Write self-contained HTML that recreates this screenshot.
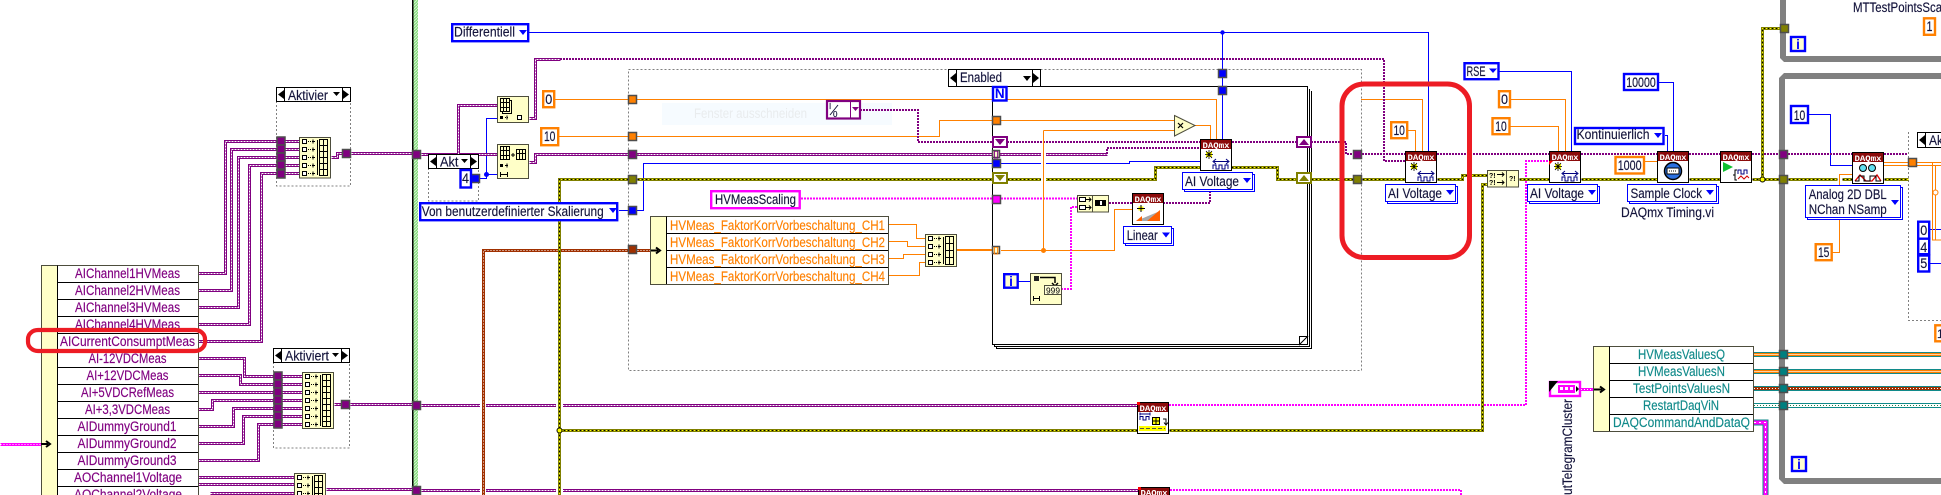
<!DOCTYPE html>
<html lang="de"><head><meta charset="utf-8"><title>LabVIEW Block Diagram</title>
<style>
html,body{margin:0;padding:0;background:#fff;overflow:hidden;width:1941px;height:495px}
svg{display:block}
text{font-family:"Liberation Sans",sans-serif;font-size:13.5px;fill:#14143c;stroke:#14143c;stroke-width:.15}
.m{text-anchor:middle}
.pp{fill:#800080;stroke:#800080}.or{fill:#ff8000;stroke:#ff8000}.te{fill:#108a8a;stroke:#108a8a}
.dq{font-family:"Liberation Mono",monospace;font-size:8.5px;fill:#fff;font-weight:bold;stroke:none}
path{fill:none}
.w path,.w line{shape-rendering:crispEdges}
.pb{stroke:#800080;stroke-width:3}.pd{stroke:#fff;stroke-width:1;stroke-dasharray:2 1}
.th{stroke:#800080;stroke-width:2;stroke-dasharray:2 1}
.yb{stroke:#808000;stroke-width:3}.yy{stroke:#ffff00;stroke-width:1}.yd{stroke:#000;stroke-width:1;stroke-dasharray:2 2}
.br{stroke:#a03000;stroke-width:3}.mg{stroke:#ff00ff;stroke-width:2;stroke-dasharray:2 1}
.o{stroke:#ff8000;stroke-width:1}.b{stroke:#0000ff;stroke-width:1}
.tu{stroke:#4d4d4d;stroke-width:1.5}
.n{fill:#ffffc8;stroke:#4d4d3d;stroke-width:1}
.c{fill:#fff;stroke-width:2.4}
.cb{stroke:#0000ff}.co{stroke:#ff8000}.cm{stroke:#ff00ff}
.dd{fill:#fff;stroke:#0000ff;stroke-width:1}
</style></head><body>
<svg xmlns="http://www.w3.org/2000/svg" width="1941" height="495" viewBox="0 0 1941 495">
<defs>
<pattern id="hat" width="3" height="3" patternUnits="userSpaceOnUse"><rect width="3" height="3" fill="#88dc80"/><path d="M0 3L3 0" stroke="#d4f5cf" stroke-width="1"/></pattern>
<g id="pw">
<path d="M198 273H225V141H299M198 290H231V149H299M198 307H238V157H299M198 324H249V165H299M198 341H261V173H299"/>
<path d="M198 358H244V376H302M198 375H240V384H302M198 392H302M198 409H212V400H302M198 426H233V408H302M198 443H243V416H302M198 460H258V424H302"/>
<path d="M198 477H294M198 484H294M210 493H294M326 489H412M421 490H1138"/>
<path d="M331 157H337V153H342M351 153H412M421 154H497M458 154V105H497M529 162H535V154H1107"/>
<path d="M334 404H341M350 404H412M421 405H1137M529 118H535V59H560"/>
</g>
<g id="yw">
<path d="M628 179H559V495M637 179H992M559 430H1137M1169 430H1482V184H1487M1007 179H1155V167H1277V179H1296M1311 179H1353M1362 179H1405M1437 179H1462V175H1487M1519 179H1549M1581 179H1657M1689 179H1720M1752 179H1779M1762 179V28H1780M1788 179H1837M1842 179H1852M1884 179H1908"/>
</g>
<g id="row"><rect x=".5" y=".5" width="4" height="4" fill="#fff" stroke="#000"/><path d="M6 2.5H12" stroke="#000" stroke-dasharray="1 1"/><path d="M11 .5V4.5M10 2.5H13" stroke="#000"/></g>
<g id="volt"><path d="M6 13H12V18H6Z" style="fill:#ffff00"/><path d="M9 11V20M5 15.5H13M6 12L12 19M12 12L6 19" stroke="#000" stroke-width=".8"/><path d="M14 22.5H28M16 20L13 22.5L16 25M26 20L29 22.5L26 25" stroke="#000080" stroke-width="1"/><path d="M13 30V26H16V30H19V26H22V30H25V26H28V30" stroke="#000080" stroke-width="1"/></g>
</defs>

<!-- green border -->
<rect x="413" y="0" width="5" height="495" fill="url(#hat)"/>
<rect x="412" y="0" width="1.5" height="495" fill="#000"/>

<!-- gray structures -->
<path d="M1780 0V58L1784 62H1941V56H1786V0Z" style="fill:#808080"/>
<path d="M1941 73H1784L1779 78V479L1784 484H1941V478H1785V79H1941Z" style="fill:#808080"/>

<!-- dotted frames -->
<g stroke="#808080" stroke-width="1" stroke-dasharray="2 2" shape-rendering="crispEdges" fill="none">
<path d="M276.5 101V186H350.5V101"/>
<path d="M273.5 362V448H349.5V362"/>
<path d="M428.5 168V201H478.5V168"/>
<path d="M628.5 69.5H1361.5V370.5H628.5Z"/>
<path d="M1908.5 132V320.5H1941"/>
</g>

<!-- ghost window label -->
<rect x="662" y="103" width="230" height="22" fill="#f6fbff"/>
<text x="694" y="118" textLength="113" lengthAdjust="spacingAndGlyphs" style="fill:#e9ecee;stroke:none">Fenster ausschneiden</text>

<g class="w">
<!-- blue + orange thin -->
<path class="b" d="M529 32.5H1428.5V151M1222.5 32.5V139M1499 71.5H1571.5V151M1659 82.5H1673.5V151M1665 135.5H1667.5V151M1809 114.5H1830.5V165.5H1852M619 210.5H643.5V163.5H992M1001 163.5H1129.5V161.5H1200M479 178.5H486.5V174.5H497M486.5 174.5V118.5H497M1018 281.5H1030M1930 229.5H1941M1930 263.5H1941"/>
<path class="o" d="M555 99.5H1216.5V139M559 136.5H939.5V120.5H1174M1043.5 130.5H1174M1043.5 130.5V250M1001 250.5H1114.5V209.5H1132M1195 125.5H1210.5V139M888 224.5H916.5V238.5H925M888 241.5H907.5V246.5H925M888 258.5H903.5V254.5H925M888 275.5H919.5V262.5H925M1361 99.5H1422.5V151M1408 130.5H1415.5V151M1510 99.5H1565.5V151M1510 126.5H1558.5V151M1645 161.5H1657M1832 252.5H1839.5V174.5H1852M1884 162.5H1908M1884 165.5H1908M1917 162.5H1941M1917 165.5H1941M1932.5 162V240H1941M1935.5 165V240"/>
<path d="M957 250H992" stroke="#ff8000" stroke-width="2"/>

<!-- thin purple -->
<path class="th" d="M560 59H1384V161H1405M860 110H918V142H992M1007 142H1200M1232 142H1296M1311 142H1346V154H1353M1362 154H1405M1437 154H1549M1581 154H1657M1689 154H1720M1752 154H1779M1788 154H1852M1884 154H1908M1107 154V148H1200M1163 203H1210V191M1109 203H1132"/>

<!-- magenta -->
<path class="mg" d="M801 198.5H992M1001 198.5H1077M1077 207H1071V289H1062M1169 405H1526V161H1549M1170 490H1461V495"/>
<g transform="translate(.5 .5)"><path d="M0 444H41" stroke="#ff00ff" stroke-width="3"/><path d="M0 444H41" stroke="#fff" stroke-dasharray="1 2"/></g>

<!-- double purple -->
<g transform="translate(.5 .5)"><use href="#pw" class="pb"/><use href="#pw" class="pd"/></g>

<!-- brown -->
<rect x="480" y="403" width="6" height="5" fill="#fff"/><rect x="480" y="488" width="6" height="5" fill="#fff"/>
<rect x="556" y="403" width="7" height="5" fill="#fff"/><rect x="556" y="488" width="7" height="5" fill="#fff"/>
<g transform="translate(.5 .5)"><path class="br" d="M483 495V250H650"/><path d="M483 495V250H650" stroke="#fff" stroke-dasharray="1 2"/></g>

<!-- yellow -->
<g transform="translate(.5 .5)"><use href="#yw" class="yb"/><use href="#yw" class="yy"/><use href="#yw" class="yd"/></g>
<rect x="1041" y="150" width="5" height="34" fill="#fff"/>
<path class="o" d="M1043.5 130.5V250"/>

<!-- teal wires -->
<path d="M1754 354.5H1941" stroke="#108a8a" stroke-width="5"/><path d="M1754 354.5H1941" stroke="#ff8000" stroke-width="3"/><path d="M1754 354.5H1941" stroke="#ffd0a0" stroke-width="1"/>
<path d="M1754 371.5H1941" stroke="#108a8a" stroke-width="5"/><path d="M1754 371.5H1941" stroke="#ff8000" stroke-width="3"/><path d="M1754 371.5H1941" stroke="#ffd0a0" stroke-width="1"/>
<path d="M1754 388.5H1941" stroke="#108a8a" stroke-width="5"/><path d="M1754 388.5H1941" stroke="#a03000" stroke-width="3"/><path d="M1754 388.5H1941" stroke="#fff" stroke-dasharray="1 2"/>
<path d="M1754 405.5H1941" stroke="#108a8a" stroke-width="5"/><path d="M1754 405.5H1941" stroke="#fff" stroke-width="3"/><path d="M1754 405.5H1941" stroke="#208040" stroke-dasharray="1 2"/>
<path d="M1754 422.5H1765.5V495" stroke="#108a8a" stroke-width="6"/><path d="M1754 422.5H1765.5V495" stroke="#ff00ff" stroke-width="4"/><path d="M1754 422.5H1765.5V495" stroke="#fff" stroke-width="1" stroke-dasharray="2 3"/>
<path d="M1581 389.5H1593" stroke="#ff00ff" stroke-width="3"/><path d="M1581 389.5H1593" stroke="#fff" stroke-dasharray="1 2"/>
</g>

<!-- junctions -->
<circle cx="1222.5" cy="32.5" r="2.2" fill="#0000ff"/>
<circle cx="486.5" cy="174.5" r="2.5" fill="#0000ff"/>
<circle cx="1043.5" cy="250.5" r="2.5" fill="#ff8000"/>
<circle cx="559.5" cy="430.5" r="2.5" fill="#ffff00" stroke="#000"/>
<circle cx="1762.5" cy="179.5" r="2.5" fill="#ffff00" stroke="#000"/>
<circle cx="1935.5" cy="192.5" r="2.5" fill="#fff" stroke="#ff8000"/>

<!-- FOR loop / case -->
<g stroke="#000" shape-rendering="crispEdges">
<path d="M994.5 344.5V346.5H1309.5V89M996.5 346.5V348.5H1311.5V91" stroke-width="1"/>
<path d="M992.5 86.5H1307.5V344.5H992.5Z" stroke-width="1"/>
</g>
<path d="M1299.5 344.5V336.5H1307.5Z" style="fill:#fff" stroke="#000"/>
<rect x="948.5" y="69.5" width="92" height="17" fill="#fff" stroke="#000"/>
<path d="M956.5 69.5V86.5M1032.5 69.5V86.5" stroke="#000"/>
<path d="M950 78L956 73V83Z" style="fill:#000"/><path d="M1039 78L1033 73V83Z" style="fill:#000"/>
<path d="M1023 76H1031L1027 81Z" style="fill:#000"/>
<text x="960" y="82" textLength="42" lengthAdjust="spacingAndGlyphs">Enabled</text>
<rect x="993" y="87" width="13.5" height="13.5" fill="#fff" stroke="#0000ff" stroke-width="2.4"/>
<text x="999.7" y="98" class="m" style="font-weight:bold;fill:#0000ff;stroke:none">N</text>

<!-- Case selectors -->
<g>
<rect x="276.5" y="87.5" width="74" height="14" fill="#fff" stroke="#000"/><path d="M284.5 87.5V101.5M342.5 87.5V101.5" stroke="#000"/>
<path d="M278 94.5L284 90V99Z" style="fill:#000"/><path d="M349 94.5L343 90V99Z" style="fill:#000"/><path d="M333 92H340L336.5 96Z" style="fill:#000"/>
<text x="288" y="100" textLength="40" lengthAdjust="spacingAndGlyphs">Aktivier</text>
<rect x="273.5" y="348.5" width="76" height="14" fill="#fff" stroke="#000"/><path d="M281.5 348.5V362.5M341.5 348.5V362.5" stroke="#000"/>
<path d="M275 355.5L281 351V360Z" style="fill:#000"/><path d="M348 355.5L342 351V360Z" style="fill:#000"/><path d="M332 353H339L335.5 357Z" style="fill:#000"/>
<text x="285" y="360.7" textLength="44" lengthAdjust="spacingAndGlyphs">Aktiviert</text>
<rect x="428.5" y="154.5" width="50" height="14" fill="#fff" stroke="#000"/><path d="M436.5 154.5V168.5M470.5 154.5V168.5" stroke="#000"/>
<path d="M430 161.5L436 157V166Z" style="fill:#000"/><path d="M477 161.5L471 157V166Z" style="fill:#000"/><path d="M461 159H468L464.5 163Z" style="fill:#000"/>
<text x="440" y="166.6" textLength="18.5" lengthAdjust="spacingAndGlyphs">Akt</text>
<rect x="1917.5" y="132.5" width="30" height="15" fill="#fff" stroke="#000"/><path d="M1925.5 132.5V147.5" stroke="#000"/><path d="M1919 140L1925 135V145Z" style="fill:#000"/>
<text x="1929" y="145" textLength="14" lengthAdjust="spacingAndGlyphs">Ak</text>
</g>

<!-- Tunnels -->
<g class="tu">
<g fill="#800080">
<rect x="277" y="137" width="8" height="8"/><rect x="277" y="145" width="8" height="8"/><rect x="277" y="153" width="8" height="8"/><rect x="277" y="161" width="8" height="8"/><rect x="277" y="170" width="8" height="8"/>
<rect x="274" y="372" width="8" height="8"/><rect x="274" y="380" width="8" height="8"/><rect x="274" y="388" width="8" height="8"/><rect x="274" y="396" width="8" height="8"/><rect x="274" y="404" width="8" height="8"/><rect x="274" y="412" width="8" height="8"/><rect x="274" y="420" width="8" height="8"/>
<rect x="342.5" y="149.5" width="8" height="8"/><rect x="341.5" y="400.5" width="8" height="8"/>
<rect x="412.5" y="150.5" width="8" height="8"/><rect x="412.5" y="401.5" width="8" height="8"/><rect x="412.5" y="486.5" width="8" height="8"/>
<rect x="628.5" y="150.5" width="8" height="8"/><rect x="1353.5" y="150.5" width="8" height="8"/><rect x="1779.5" y="150.5" width="8" height="8"/>
</g>
<rect x="628.5" y="95.5" width="8" height="8" fill="#ff8000"/>
<rect x="628.5" y="132.5" width="8" height="8" fill="#ff8000"/>
<rect x="992.5" y="116.5" width="8" height="8" fill="#ff8000"/>
<rect x="1908.5" y="158.5" width="8" height="8" fill="#ff8000"/>
<rect x="628.5" y="175.5" width="8" height="8" fill="#808000"/>
<rect x="1353.5" y="175.5" width="8" height="8" fill="#808000"/>
<rect x="1779.5" y="175.5" width="8" height="8" fill="#808000"/>
<rect x="1780.5" y="24.5" width="8" height="8" fill="#808000"/>
<rect x="628.5" y="206.5" width="8" height="8" fill="#0000ff"/>
<rect x="992.5" y="159.5" width="8" height="8" fill="#0000ff"/>
<rect x="1218.5" y="69.5" width="8" height="8" fill="#0000ff"/>
<rect x="1218.5" y="86.5" width="8" height="8" fill="#0000ff"/>
<rect x="471.5" y="174.5" width="8" height="8" fill="#0000ff"/>
<rect x="628.5" y="245.5" width="8" height="8" fill="#a03000"/>
<rect x="992.5" y="195.5" width="8" height="8" fill="#ff00ff"/>
<g fill="#007f7f"><rect x="1779.5" y="350.5" width="8" height="8"/><rect x="1779.5" y="367.5" width="8" height="8"/><rect x="1779.5" y="384.5" width="8" height="8"/><rect x="1779.5" y="401.5" width="8" height="8"/></g>
<rect x="992.5" y="150.5" width="7" height="7" fill="#fffdd0"/>
<rect x="992.5" y="246.5" width="7" height="7" fill="#fffdd0"/>
</g>
<text x="996" y="157" class="m" style="font-size:8px;font-weight:bold;fill:#800080;stroke:none">[]</text>
<text x="996" y="253" class="m" style="font-size:8px;font-weight:bold;fill:#ff8000;stroke:none">[]</text>

<!-- Shift registers -->
<g stroke-width="2">
<rect x="993" y="137" width="14" height="10" fill="#fff" stroke="#800080"/><path d="M995 139H1005L1000 145Z" style="fill:#800080"/>
<rect x="993" y="173" width="14" height="10" fill="#fff" stroke="#808000"/><path d="M995 175H1005L1000 181Z" style="fill:#808000"/>
<rect x="1297" y="137" width="14" height="10" fill="#fff" stroke="#800080"/><path d="M1299 145H1309L1304 139Z" style="fill:#800080"/>
<rect x="1297" y="173" width="14" height="10" fill="#fff" stroke="#808000"/><path d="M1299 181H1309L1304 175Z" style="fill:#808000"/>
</g>

<!-- Multiply -->
<path d="M1174.5 115.5L1195 125.5L1174.5 136Z" style="fill:#ffffc8" stroke="#4d4d3d"/>
<path d="M1178 123L1183 128M1183 123L1178 128" stroke="#000" stroke-width="1.2"/>

<!-- Build arrays -->
<g>
<rect class="n" x="299.5" y="137.5" width="31" height="40.5"/>
<use href="#row" x="302" y="139"/><use href="#row" x="302" y="147"/><use href="#row" x="302" y="155"/><use href="#row" x="302" y="163"/><use href="#row" x="302" y="171"/>
<path d="M319.5 139.5H327.5V175.5H319.5ZM323.5 139.5V175.5M319.5 145.5H327.5M319.5 151.5H327.5M319.5 157.5H327.5M319.5 163.5H327.5M319.5 169.5H327.5M317.5 140V175" stroke="#000"/>
<rect class="n" x="302.5" y="372.5" width="31" height="56"/>
<use href="#row" x="305" y="374"/><use href="#row" x="305" y="382"/><use href="#row" x="305" y="390"/><use href="#row" x="305" y="398"/><use href="#row" x="305" y="406"/><use href="#row" x="305" y="414"/><use href="#row" x="305" y="422"/>
<path d="M322.5 374.5H330.5V426.5H322.5ZM326.5 374.5V426.5M322.5 380.5H330.5M322.5 386.5H330.5M322.5 392.5H330.5M322.5 398.5H330.5M322.5 404.5H330.5M322.5 410.5H330.5M322.5 416.5H330.5M322.5 421.5H330.5M320.5 375V426" stroke="#000"/>
<rect class="n" x="294.5" y="473.5" width="31" height="30"/>
<use href="#row" x="297" y="475"/><use href="#row" x="297" y="483"/><use href="#row" x="297" y="491"/>
<path d="M314.5 475.5H322.5V500H314.5ZM318.5 475.5V500M314.5 481.5H322.5M314.5 487.5H322.5M314.5 493.5H322.5M312.5 476V500" stroke="#000"/>
<rect class="n" x="925.5" y="234.5" width="31" height="32"/>
<use href="#row" x="928" y="236"/><use href="#row" x="928" y="244"/><use href="#row" x="928" y="252"/><use href="#row" x="928" y="260"/>
<path d="M945.5 236.5H953.5V264.5H945.5ZM949.5 236.5V264.5M945.5 243.5H953.5M945.5 250.5H953.5M945.5 257.5H953.5M943.5 237V264" stroke="#000"/>
</g>

<!-- array subset nodes -->
<rect class="n" x="497.5" y="96.5" width="31" height="26"/>
<path d="M500.5 98.5H509.5V111.5H500.5ZM503.5 98.5V111.5M506.5 98.5V111.5M500.5 102.5H509.5M500.5 107.5H509.5M509.5 100.5H511.5V113.5H502.5V111.5" stroke="#000"/>
<rect x="500" y="116" width="3" height="3" fill="#000"/><path d="M505 117.5H508" stroke="#000" stroke-dasharray="1 1"/><path d="M507 115.5V119.5" stroke="#000"/><rect x="517.5" y="115.5" width="4" height="4" stroke="#000" fill="#fff"/>
<rect class="n" x="497.5" y="144.5" width="31" height="34"/>
<path d="M500.5 146.5H509.5V159.5H500.5ZM503.5 146.5V159.5M506.5 146.5V159.5M500.5 150.5H509.5M500.5 155.5H509.5M516.5 149.5H525.5V159.5H516.5ZM519.5 149.5V159.5M522.5 149.5V159.5M516.5 153.5H525.5M511 155H515M513 153V157" stroke="#000"/>
<rect x="500" y="164" width="3" height="3" fill="#000"/><path d="M505 165.5H508M507 163.5V167.5" stroke="#000"/><path d="M500 174.5H508M500.5 172V177M507.5 172V177" stroke="#000"/>

<!-- bundler/format nodes -->
<rect class="n" x="1077.5" y="195.5" width="31" height="16.5"/>
<path d="M1092.5 195.5V212" stroke="#4d4d3d"/>
<rect x="1079.5" y="197.5" width="6" height="4" stroke="#000" fill="#fff"/><rect x="1079.5" y="205.5" width="6" height="4" stroke="#000" fill="#fff"/><path d="M1086 199.5H1091M1086 207.5H1091M1089 197.5L1091 199.5L1089 201.5M1089 205.5L1091 207.5L1089 209.5" stroke="#000"/>
<rect x="1095" y="200" width="11" height="6" fill="#000"/><rect x="1100" y="201" width="2" height="4" fill="#fff"/>
<rect class="n" x="1030.5" y="273.5" width="31" height="31"/>
<rect x="1034" y="276" width="5" height="5" fill="#222"/><path d="M1040 277.5H1055V283M1052 283L1055 286L1058 283" stroke="#000" stroke-width="1.5"/>
<rect x="1044.5" y="285.5" width="17" height="9" stroke="#4d4d3d" fill="#ffffd8"/><text x="1053" y="293.5" class="m" textLength="14" lengthAdjust="spacingAndGlyphs" style="font-size:8px;fill:#000;stroke:none">999</text>
<path d="M1033 298.5H1040M1033.5 296V301M1039.5 296V301" stroke="#000"/>
<rect class="n" x="1487.5" y="170.5" width="31" height="16.5"/><path d="M1506.5 170.5V187" stroke="#4d4d3d"/>
<text x="1489" y="178" style="font-size:7px;font-weight:bold;fill:#000;stroke:none">?!</text><text x="1489" y="185" style="font-size:7px;font-weight:bold;fill:#000;stroke:none">?!</text><text x="1509" y="181" style="font-size:7px;font-weight:bold;fill:#000;stroke:none">?!</text>
<path d="M1497 174.5H1504M1497 182.5H1504M1502 172.5L1504 174.5L1502 176.5M1502 180.5L1504 182.5L1502 184.5" stroke="#000"/>

<!-- Clusters -->
<g>
<rect x="41.5" y="265.5" width="157" height="235" fill="#fff" stroke="#4d4d3d"/>
<rect x="42" y="266" width="15" height="234" fill="#ffffc8"/>
<path d="M57.5 265.5V495M57 282.5H198M57 299.5H198M57 316.5H198M57 333.5H198M57 350.5H198M57 367.5H198M57 384.5H198M57 401.5H198M57 418.5H198M57 435.5H198M57 452.5H198M57 469.5H198M57 486.5H198" stroke="#000" shape-rendering="crispEdges"/>
<path d="M41 444H48M46 441L50 444L46 447" stroke="#000" stroke-width="2"/>
<g class="m">
<text class="pp m" x="127.5" y="278" textLength="105" lengthAdjust="spacingAndGlyphs">AIChannel1HVMeas</text>
<text class="pp m" x="127.5" y="295" textLength="105" lengthAdjust="spacingAndGlyphs">AIChannel2HVMeas</text>
<text class="pp m" x="127.5" y="312" textLength="105" lengthAdjust="spacingAndGlyphs">AIChannel3HVMeas</text>
<text class="pp m" x="127.5" y="329" textLength="105" lengthAdjust="spacingAndGlyphs">AIChannel4HVMeas</text>
<text class="pp m" x="127.5" y="346" textLength="135" lengthAdjust="spacingAndGlyphs">AICurrentConsumptMeas</text>
<text class="pp m" x="127.5" y="363" textLength="78" lengthAdjust="spacingAndGlyphs">AI-12VDCMeas</text>
<text class="pp m" x="127.5" y="380" textLength="82" lengthAdjust="spacingAndGlyphs">AI+12VDCMeas</text>
<text class="pp m" x="127.5" y="397" textLength="93" lengthAdjust="spacingAndGlyphs">AI+5VDCRefMeas</text>
<text class="pp m" x="127.5" y="414" textLength="85" lengthAdjust="spacingAndGlyphs">AI+3,3VDCMeas</text>
<text class="pp m" x="127" y="431" textLength="99" lengthAdjust="spacingAndGlyphs">AIDummyGround1</text>
<text class="pp m" x="127" y="448" textLength="99" lengthAdjust="spacingAndGlyphs">AIDummyGround2</text>
<text class="pp m" x="127" y="465" textLength="99" lengthAdjust="spacingAndGlyphs">AIDummyGround3</text>
<text class="pp m" x="128" y="482" textLength="108" lengthAdjust="spacingAndGlyphs">AOChannel1Voltage</text>
<text class="pp m" x="128" y="499" textLength="108" lengthAdjust="spacingAndGlyphs">AOChannel2Voltage</text>
</g>
<rect x="650.5" y="216.5" width="238" height="68" fill="#fff" stroke="#4d4d3d"/>
<rect x="651" y="217" width="15.5" height="67" fill="#ffffc8"/>
<path d="M666.5 216.5V284M666 233.5H888M666 250.5H888M666 267.5H888" stroke="#000" shape-rendering="crispEdges"/>
<path d="M651 250.5H658M656 247.5L660 250.5L656 253.5" stroke="#000" stroke-width="2"/>
<text class="or" x="670" y="230" textLength="215" lengthAdjust="spacingAndGlyphs">HVMeas_FaktorKorrVorbeschaltung_CH1</text>
<text class="or" x="670" y="247" textLength="215" lengthAdjust="spacingAndGlyphs">HVMeas_FaktorKorrVorbeschaltung_CH2</text>
<text class="or" x="670" y="264" textLength="215" lengthAdjust="spacingAndGlyphs">HVMeas_FaktorKorrVorbeschaltung_CH3</text>
<text class="or" x="670" y="281" textLength="215" lengthAdjust="spacingAndGlyphs">HVMeas_FaktorKorrVorbeschaltung_CH4</text>
<rect x="1593.5" y="346.5" width="160" height="85" fill="#fff" stroke="#4d4d3d"/>
<rect x="1594" y="347" width="15.5" height="84" fill="#ffffc8"/>
<path d="M1609.5 346.5V431M1609 363.5H1753M1609 380.5H1753M1609 397.5H1753M1609 414.5H1753" stroke="#000" shape-rendering="crispEdges"/>
<path d="M1594 389.5H1602M1600 386.5L1604 389.5L1600 392.5" stroke="#000" stroke-width="2"/>
<text class="te m" x="1681.5" y="359" textLength="87" lengthAdjust="spacingAndGlyphs">HVMeasValuesQ</text>
<text class="te m" x="1681.5" y="376" textLength="87" lengthAdjust="spacingAndGlyphs">HVMeasValuesN</text>
<text class="te m" x="1681.5" y="393" textLength="97" lengthAdjust="spacingAndGlyphs">TestPointsValuesN</text>
<text class="te m" x="1681" y="410" textLength="76" lengthAdjust="spacingAndGlyphs">RestartDaqViN</text>
<text class="te m" x="1681.5" y="427" textLength="137" lengthAdjust="spacingAndGlyphs">DAQCommandAndDataQ</text>
</g>

<!-- Telegram terminal -->
<rect x="1550" y="382" width="30" height="14" fill="#fff" stroke="#ff00ff" stroke-width="2.4"/>
<path d="M1549 381H1558L1549 392Z" style="fill:#000"/>
<rect x="1558" y="385" width="17" height="8" fill="#ff00ff"/><rect x="1560" y="387" width="3" height="3" fill="#fff"/><rect x="1565" y="387" width="3" height="3" fill="#fff"/><rect x="1570" y="387" width="3" height="3" fill="#fff"/>
<path d="M1576 386L1579 389L1576 392Z" style="fill:#000"/>
<text transform="translate(1572 399) rotate(-90)" text-anchor="end" textLength="96" lengthAdjust="spacingAndGlyphs">utTelegramCluster</text>

<!-- Constants -->
<rect class="c cb" x="452.2" y="24.2" width="76" height="17"/>
<text x="454" y="36.7" textLength="61" lengthAdjust="spacingAndGlyphs">Differentiell</text>
<path d="M519 30H527L523 35Z" style="fill:#0000ff"/>
<rect class="c cb" x="420.2" y="203.2" width="197" height="17"/>
<text x="421.7" y="216" textLength="182" lengthAdjust="spacingAndGlyphs">Von benutzerdefinierter Skalierung</text>
<path d="M609 208H617L613 213Z" style="fill:#0000ff"/>
<rect class="c cb" x="460.5" y="170" width="10.5" height="17.5"/><text class="m" x="465.5" y="183" textLength="7" lengthAdjust="spacingAndGlyphs">4</text>
<rect class="c co" x="543.2" y="91.2" width="11" height="16"/><text class="m" x="548.7" y="104" textLength="7" lengthAdjust="spacingAndGlyphs">0</text>
<rect class="c co" x="541.2" y="128.2" width="17" height="17"/><text class="m" x="549.7" y="141" textLength="11.5" lengthAdjust="spacingAndGlyphs">10</text>
<rect class="c cm" x="711.2" y="191.2" width="88.5" height="17"/><text x="715" y="204" textLength="81" lengthAdjust="spacingAndGlyphs">HVMeasScaling</text>
<rect x="827" y="101" width="33" height="17.5" fill="#fff" stroke="#800080" stroke-width="2.2"/><path d="M850.5 101V118" stroke="#800080"/>
<path d="M852 107H859L855.5 111Z" style="fill:#800080"/>
<text x="829" y="109" style="font-size:8px">I</text><path d="M830 115L838 105" stroke="#14143c"/><text x="833" y="117" style="font-size:8px">0</text>
<rect class="c cb" x="1004.2" y="274.2" width="13.5" height="13.5" style="fill:#ffffd0"/><text class="m" x="1011" y="286" style="font-weight:bold;fill:#0000ff;stroke:none">i</text>
<rect class="c co" x="1391.2" y="122.2" width="16" height="16"/><text class="m" x="1399.2" y="135" textLength="11.5" lengthAdjust="spacingAndGlyphs">10</text>
<rect class="c cb" x="1464.5" y="63.2" width="34" height="16"/><text x="1466.5" y="76" textLength="19" lengthAdjust="spacingAndGlyphs">RSE</text><path d="M1489 68.5H1497L1493 73Z" style="fill:#0000ff"/>
<rect class="c co" x="1499" y="91.2" width="11" height="16"/><text class="m" x="1504.5" y="104" textLength="7" lengthAdjust="spacingAndGlyphs">0</text>
<rect class="c co" x="1492.5" y="118.2" width="17" height="16"/><text class="m" x="1501" y="131" textLength="11.5" lengthAdjust="spacingAndGlyphs">10</text>
<rect class="c cb" x="1575" y="128" width="88.5" height="16"/><text x="1576.5" y="139" textLength="73" lengthAdjust="spacingAndGlyphs">Kontinuierlich</text><path d="M1654 133H1662L1658 138Z" style="fill:#0000ff"/>
<rect class="c cb" x="1624" y="74" width="34" height="16"/><text class="m" x="1641" y="87" textLength="29.5" lengthAdjust="spacingAndGlyphs">10000</text>
<rect class="c co" x="1615.5" y="157" width="28.5" height="16.5"/><text class="m" x="1629.7" y="170" textLength="24" lengthAdjust="spacingAndGlyphs">1000</text>
<rect class="c cb" x="1791" y="37" width="14" height="14" style="fill:#ffffd0"/><text class="m" x="1798" y="49" style="font-weight:bold;fill:#0000ff;stroke:none">i</text>
<rect class="c cb" x="1792" y="457" width="14" height="14" style="fill:#ffffd0"/><text class="m" x="1799" y="469" style="font-weight:bold;fill:#0000ff;stroke:none">i</text>
<rect class="c cb" x="1791" y="106" width="17" height="17"/><text class="m" x="1799.5" y="120" textLength="11.5" lengthAdjust="spacingAndGlyphs">10</text>
<rect class="c co" x="1815.7" y="244.2" width="16" height="16"/><text class="m" x="1823.7" y="257" textLength="11.5" lengthAdjust="spacingAndGlyphs">15</text>
<rect class="c co" x="1924" y="18.3" width="11" height="16.5"/><text class="m" x="1929.5" y="31" textLength="6" lengthAdjust="spacingAndGlyphs">1</text>
<rect class="c cb" x="1918.2" y="221.7" width="11" height="17"/><text class="m" x="1923.7" y="235" textLength="7" lengthAdjust="spacingAndGlyphs">0</text>
<rect class="c cb" x="1918.2" y="238.7" width="11" height="15.5"/><text class="m" x="1923.7" y="252" textLength="7" lengthAdjust="spacingAndGlyphs">4</text>
<rect class="c cb" x="1918.2" y="255.5" width="11" height="16"/><text class="m" x="1923.7" y="268" textLength="7" lengthAdjust="spacingAndGlyphs">5</text>
<rect class="c co" x="1935.3" y="325.3" width="12" height="16"/><text x="1937" y="338" style="font-size:12px">1</text>

<!-- Polymorphic selectors -->
<g shape-rendering="crispEdges">
<rect class="dd" x="1184.5" y="174.5" width="70" height="17"/><rect class="dd" x="1182.5" y="172.5" width="70" height="17"/>
<rect class="dd" x="1125.5" y="228.5" width="48" height="17"/><rect class="dd" x="1123.5" y="226.5" width="48" height="17"/>
<rect class="dd" x="1387.5" y="186.5" width="70" height="17"/><rect class="dd" x="1385.5" y="184.5" width="70" height="17"/>
<rect class="dd" x="1529.5" y="186.5" width="70" height="17"/><rect class="dd" x="1527.5" y="184.5" width="70" height="17"/>
<rect class="dd" x="1629.5" y="186.5" width="89" height="17"/><rect class="dd" x="1627.5" y="184.5" width="89" height="17"/>
<rect class="dd" x="1807.5" y="187.5" width="95" height="32"/><rect class="dd" x="1805.5" y="185.5" width="95" height="32"/>
</g>
<text x="1185" y="186" textLength="54" lengthAdjust="spacingAndGlyphs">AI Voltage</text><path d="M1243 178H1251L1247 183Z" style="fill:#0000ff"/>
<text x="1126.7" y="240" textLength="31" lengthAdjust="spacingAndGlyphs">Linear</text><path d="M1162 232.5H1170L1166 237.5Z" style="fill:#0000ff"/>
<text x="1388" y="198" textLength="54" lengthAdjust="spacingAndGlyphs">AI Voltage</text><path d="M1446 190H1454L1450 195Z" style="fill:#0000ff"/>
<text x="1530" y="198" textLength="54" lengthAdjust="spacingAndGlyphs">AI Voltage</text><path d="M1588 190H1596L1592 195Z" style="fill:#0000ff"/>
<text x="1630.5" y="198" textLength="71.5" lengthAdjust="spacingAndGlyphs">Sample Clock</text><path d="M1706 190H1714L1710 195Z" style="fill:#0000ff"/>
<text x="1621" y="217" textLength="93" lengthAdjust="spacingAndGlyphs">DAQmx Timing.vi</text>
<text x="1808.7" y="199" textLength="78" lengthAdjust="spacingAndGlyphs">Analog 2D DBL</text>
<text x="1808.7" y="214" textLength="78" lengthAdjust="spacingAndGlyphs">NChan NSamp</text><path d="M1891 200H1899L1895 205Z" style="fill:#0000ff"/>
<text x="1853" y="12" textLength="107" lengthAdjust="spacingAndGlyphs">MTTestPointsScaling</text>

<!-- DAQmx VIs -->
<g>
<rect x="1200.5" y="139.5" width="31" height="31" fill="#fff" stroke="#000"/><rect x="1201" y="140" width="30" height="9" fill="#8b0a0a"/>
<text class="dq" x="1216" y="148" text-anchor="middle" textLength="27" lengthAdjust="spacingAndGlyphs">DAQmx</text>
<use href="#volt" x="1200" y="139"/>
<rect x="1405.5" y="151.5" width="31" height="31" fill="#fff" stroke="#000"/><rect x="1406" y="152" width="30" height="9" fill="#8b0a0a"/>
<text class="dq" x="1421" y="160" text-anchor="middle" textLength="27" lengthAdjust="spacingAndGlyphs">DAQmx</text>
<use href="#volt" x="1405" y="151"/>
<rect x="1549.5" y="151.5" width="31" height="31" fill="#fff" stroke="#000"/><rect x="1550" y="152" width="30" height="9" fill="#8b0a0a"/>
<text class="dq" x="1565" y="160" text-anchor="middle" textLength="27" lengthAdjust="spacingAndGlyphs">DAQmx</text>
<use href="#volt" x="1549" y="151"/>
<path d="M1549 161H1553L1549 165Z" style="fill:#ff0000"/>
<rect x="1132.5" y="193.5" width="31" height="31" fill="#fff" stroke="#000"/><rect x="1133" y="194" width="30" height="9" fill="#8b0a0a"/>
<text class="dq" x="1148" y="202" text-anchor="middle" textLength="27" lengthAdjust="spacingAndGlyphs">DAQmx</text>
<rect x="1138.5" y="206.5" width="5" height="4" fill="#ffff00"/><path d="M1137 208.5H1145M1141 205V212" stroke="#000"/>
<path d="M1136 221H1160V211Z" style="fill:#a8a8a8"/><path d="M1147 221H1160V210Z" style="fill:#ff6000"/><path d="M1136 221H1142V216Z" style="fill:#ff6000"/>
<rect x="1657.5" y="151.5" width="31" height="31" fill="#fff" stroke="#000"/><rect x="1658" y="152" width="30" height="9" fill="#8b0a0a"/>
<text class="dq" x="1673" y="160" text-anchor="middle" textLength="27" lengthAdjust="spacingAndGlyphs">DAQmx</text>
<circle cx="1673" cy="171" r="8.5" fill="#2a70e0" stroke="#000" stroke-width="1.5"/><rect x="1667" y="168" width="12" height="6" fill="#fff" stroke="#000"/><path d="M1669 171H1677" stroke="#000" stroke-dasharray="1 1"/>
<rect x="1720.5" y="151.5" width="31" height="31" fill="#fff" stroke="#000"/><rect x="1721" y="152" width="30" height="9" fill="#8b0a0a"/>
<text class="dq" x="1736" y="160" text-anchor="middle" textLength="27" lengthAdjust="spacingAndGlyphs">DAQmx</text>
<path d="M1723 162L1733 167L1723 172Z" style="fill:#10c030"/>
<path d="M1737 170H1735V180H1737M1733 175H1735" stroke="#000"/><path d="M1738 174V170H1741V174H1744V170H1747V174" stroke="#000080"/><path d="M1738 179L1741 176L1744 179L1747 176L1749 178" stroke="#d00000"/>
<rect x="1852.5" y="152.5" width="31" height="31" fill="#fff" stroke="#000"/><rect x="1853" y="153" width="30" height="9" fill="#8b0a0a"/>
<text class="dq" x="1868" y="161" text-anchor="middle" textLength="27" lengthAdjust="spacingAndGlyphs">DAQmx</text>
<circle cx="1863" cy="168" r="3.5" fill="#60e0f0" stroke="#000"/><circle cx="1872" cy="168" r="3.5" fill="#60e0f0" stroke="#000"/>
<path d="M1855 181L1860 175L1866 181H1872L1877 175L1881 181" stroke="#e00000" stroke-width="1.3"/><path d="M1855 181H1859V176H1864V181H1870V176H1876V181H1881" stroke="#000"/>
<rect x="1137.5" y="402.5" width="31" height="31" fill="#fff" stroke="#000"/><rect x="1138" y="403" width="30" height="9" fill="#8b0a0a"/><rect x="1137" y="402" width="3" height="3" fill="#ff0000"/>
<text class="dq" x="1153" y="411" text-anchor="middle" textLength="27" lengthAdjust="spacingAndGlyphs">DAQmx</text>
<path d="M1140 414H1150M1140 412.5V415.5M1150 412.5V415.5M1140 420V416.5H1143V420H1146V416.5H1149V420" stroke="#000080"/>
<rect x="1152.5" y="417.5" width="7" height="7" fill="#ffff00" stroke="#000"/><path d="M1156 417.5V424.5M1152.5 421H1159.5" stroke="#000"/>
<path d="M1163 419H1166V424M1164 422.5L1166 425L1168 422.5" stroke="#000"/>
<rect x="1139" y="426" width="27" height="5" fill="#ffff00"/><path d="M1140 428.5H1165" stroke="#555" stroke-dasharray="4 2"/>
<rect x="1138.5" y="487.5" width="31" height="20" fill="#8b0a0a" stroke="#000"/><rect x="1138" y="487" width="3" height="3" fill="#ff0000"/>
<text class="dq" x="1154" y="495.5" text-anchor="middle" textLength="27" lengthAdjust="spacingAndGlyphs">DAQmx</text>
</g>

<!-- Red annotations -->
<rect x="28" y="330" width="177" height="21" rx="10" ry="9" fill="none" stroke="#ed1c24" stroke-width="4.2"/>
<rect x="1342" y="84" width="127.5" height="173.5" rx="22" ry="22" fill="none" stroke="#ed1c24" stroke-width="5"/>
</svg>
</body></html>
